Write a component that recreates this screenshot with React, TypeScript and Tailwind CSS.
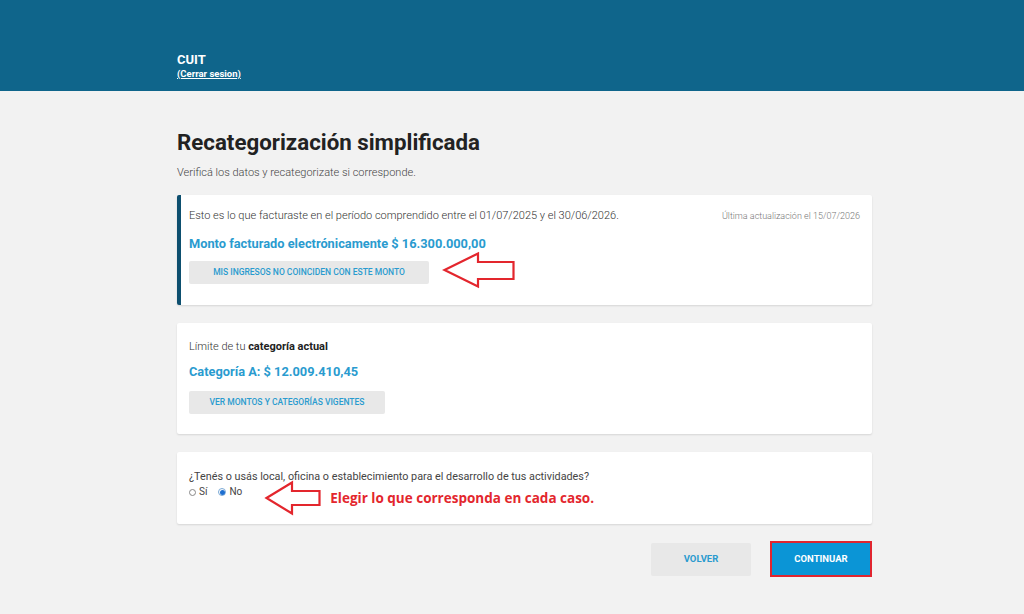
import React from "react";

function ArrowLeft({ w, h, head, shaftTop, shaftBottom }: { w: number; h: number; head: number; shaftTop: number; shaftBottom: number }) {
  const m = h / 2;
  return (
    <svg width={w} height={h} viewBox={`0 0 ${w} ${h}`} className="overflow-visible">
      <polygon
        points={`1.5,${m} ${head},1.5 ${head},${shaftTop} ${w - 1.5},${shaftTop} ${w - 1.5},${shaftBottom} ${head},${shaftBottom} ${head},${h - 1.5}`}
        fill="white"
        stroke="#e3262d"
        strokeWidth="2.2"
        strokeLinejoin="miter"
      />
    </svg>
  );
}

export default function App() {
  return (
    <div className="min-h-[614px] w-[1024px] bg-[#f2f2f2] text-[#333]" style={{ fontFamily: "Roboto, 'Liberation Sans', sans-serif" }}>
      <header className="h-[91px] bg-[#0f658b] pl-[177px] pt-[52px]">
        <div className="text-[13px] font-bold leading-[15px] text-white">CUIT</div>
        <div className="mt-[1px] text-[9.5px] font-bold leading-[12px] text-white underline">(Cerrar sesion)</div>
      </header>

      <main className="ml-[177px] w-[695px] pt-[38px]">
        <h1 className="text-[22.3px] font-bold leading-[26px] text-[#222]">Recategorización simplificada</h1>
        <p className="mt-[11px] text-[11px] font-light leading-[14px] text-[#444]">Verificá los datos y recategorizate si corresponde.</p>

        <section className="relative mt-[15px] h-[110px] rounded-[2px] border-l-[4px] border-[#0d4f6f] bg-white pl-[8px] pr-[12px] pt-[14px] shadow-[0_1px_2px_rgba(0,0,0,0.12)]">
          <div className="flex items-center justify-between">
            <span className="text-[11px] font-light leading-[14px] text-[#333]">Esto es lo que facturaste en el período comprendido entre el 01/07/2025 y el 30/06/2026.</span>
            <span className="text-[9px] font-light leading-[14px] text-[#777]">Última actualización el 15/07/2026</span>
          </div>
          <div className="mt-[13px] text-[12.8px] font-bold leading-[16px] text-[#2a9bcf]">Monto facturado electrónicamente $ 16.300.000,00</div>
          <div className="mt-[5px] flex items-center">
            <button className="h-[23px] w-[240px] rounded-[2px] bg-[#e8e8e8] text-[8.5px] font-medium uppercase text-[#2a9bcf]">Mis ingresos no coinciden con este monto</button>
            <div className="ml-[14px] mt-[-5px]">
              <ArrowLeft w={72} h={36} head={35} shaftTop={10} shaftBottom={27} />
            </div>
          </div>
        </section>

        <section className="mt-[18px] h-[111px] rounded-[2px] bg-white px-[12px] pt-[17px] shadow-[0_1px_2px_rgba(0,0,0,0.12)]">
          <div className="text-[11px] font-light leading-[14px] text-[#333]">
            Límite de tu <span className="font-bold text-[#222]">categoría actual</span>
          </div>
          <div className="mt-[10px] text-[12.8px] font-bold leading-[16px] text-[#2a9bcf]">Categoría A: $ 12.009.410,45</div>
          <button className="mt-[11px] h-[23px] w-[196px] rounded-[2px] bg-[#e8e8e8] text-[8.5px] font-medium uppercase text-[#2a9bcf]">Ver montos y categorías vigentes</button>
        </section>

        <section className="mt-[18px] h-[72px] rounded-[2px] bg-white px-[12px] pt-[18px] shadow-[0_1px_2px_rgba(0,0,0,0.12)]">
          <div className="text-[10.8px] leading-[14px] text-[#444]">¿Tenés o usás local, oficina o establecimiento para el desarrollo de tus actividades?</div>
          <div className="flex items-start">
            <div className="mt-[2px] flex items-center text-[10px] leading-[12px] text-[#444]">
              <span className="inline-block h-[7px] w-[7px] rounded-full border border-[#888] bg-white"></span>
              <span className="ml-[3px]">Sí</span>
              <span className="ml-[11px] flex h-[8px] w-[8px] items-center justify-center rounded-full border border-[#7aa9d6] bg-white">
                <span className="h-[5px] w-[5px] rounded-full bg-[#1e6fd0]"></span>
              </span>
              <span className="ml-[3px]">No</span>
            </div>
            <div className="ml-[23px] mt-[-3px]">
              <ArrowLeft w={56} h={34} head={27} shaftTop={10} shaftBottom={24} />
            </div>
            <div className="ml-[9px] mt-[5px] text-[13.5px] font-bold leading-[18px] text-[#e3262d]" style={{ fontFamily: "'Open Sans', 'Liberation Sans', sans-serif" }}>
              Elegir lo que corresponda en cada caso.
            </div>
          </div>
        </section>

        <div className="mt-[17px] flex justify-end">
          <button className="mt-[2px] h-[33px] w-[100px] rounded-[2px] bg-[#e8e8e8] text-[9.5px] font-bold text-[#2a9bcf]">VOLVER</button>
          <button className="ml-[19px] h-[36px] w-[102px] border-[2px] border-[#e1252f] bg-[#0b95d6] text-[9.5px] font-bold text-white">CONTINUAR</button>
        </div>
      </main>
    </div>
  );
}
